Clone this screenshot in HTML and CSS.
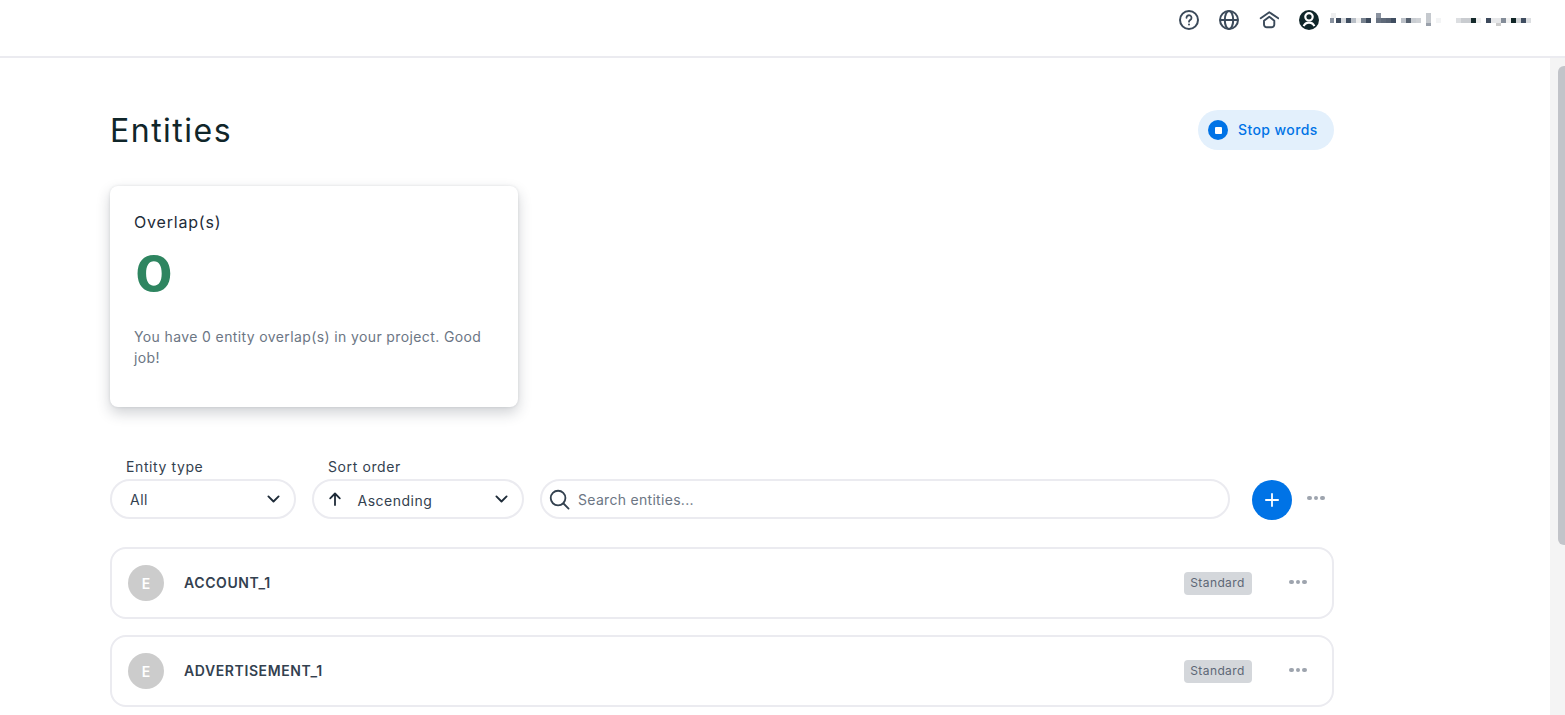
FILE: index.html
```html
<!DOCTYPE html>
<html lang="en">
<head>
<meta charset="utf-8">
<title>Entities</title>
<link rel="stylesheet" href="styles.css">
</head>
<body>
<header class="topbar">
  <svg class="top-icon" viewBox="0 0 20 20" fill="none" stroke="#3b4a5a" stroke-width="2" stroke-linecap="round" stroke-linejoin="round"><circle cx="10" cy="10" r="9"/><path d="M7.500 7.800a2.500 2.500 0 1 1 3.800 2.100c-.9.5-1.300 1-1.300 1.800" stroke-width="1.800"/><path d="M10 14.500v.1" stroke-width="2"/></svg>
  <svg class="top-icon" viewBox="0 0 20 20" fill="none" stroke="#3b4a5a" stroke-width="2"><circle cx="10" cy="10" r="9"/><ellipse cx="10" cy="10" rx="4.200" ry="9"/><path d="M1 10h18"/></svg>
  <svg class="top-icon" viewBox="0 0 20 20" fill="none" stroke="#3b4a5a" stroke-width="1.900" stroke-linecap="round" stroke-linejoin="round"><path d="M1.700 8.300 10.300 2.300l9 6"/><path d="M5 10.700 10.300 6.700l5 4v3.800a2.800 2.800 0 0 1-2.800 2.800H7.800A2.800 2.800 0 0 1 5 14.500z"/></svg>
  <svg class="top-icon" viewBox="0 0 20 20" fill="none"><circle cx="10" cy="10" r="10" fill="#10262a"/><circle cx="10" cy="6.800" r="3.700" stroke="#fff" stroke-width="2.200"/><path d="M4.700 16.200c.9-2.400 2.800-3.600 5.300-3.600s4.400 1.200 5.300 3.600" stroke="#fff" stroke-width="2.200"/></svg>
  <svg class="mosaic" viewBox="0 0 205 15" shape-rendering="crispEdges">
    <rect x="1" y="5" width="4" height="5" fill="#8a93a0"/><rect x="2" y="0" width="5" height="5" fill="#eeeff0"/>
    <rect x="7" y="5" width="5" height="5" fill="#3d4a5c"/><rect x="12" y="5" width="5" height="5" fill="#d5d8dc"/>
    <rect x="17" y="5" width="5" height="5" fill="#3f4d60"/><rect x="22" y="5" width="5" height="5" fill="#b9bfc7"/>
    <rect x="27" y="5" width="5" height="5" fill="#eeeeee"/><rect x="32" y="5" width="5" height="5" fill="#78828f"/>
    <rect x="37" y="5" width="5" height="5" fill="#3d4a5c"/><rect x="47" y="0" width="5" height="5" fill="#8b93a0"/>
    <rect x="47" y="5" width="5" height="5" fill="#6a7483"/><rect x="52" y="5" width="5" height="5" fill="#5f6a79"/>
    <rect x="57" y="5" width="5" height="5" fill="#586373"/><rect x="62" y="5" width="5" height="5" fill="#3f4d60"/>
    <rect x="72" y="5" width="5" height="5" fill="#bcc1c8"/><rect x="77" y="5" width="5" height="5" fill="#56616f"/>
    <rect x="82" y="5" width="5" height="5" fill="#c9cdd2"/><rect x="87" y="5" width="5" height="5" fill="#cfd2d6"/>
    <rect x="97" y="0" width="5" height="10" fill="#c5c9ce"/><rect x="97" y="10" width="5" height="3" fill="#9aa1ab"/>
    <rect x="107" y="5" width="5" height="5" fill="#f3f4f5"/><rect x="127" y="5" width="5" height="5" fill="#dcdee1"/>
    <rect x="132" y="5" width="10" height="5" fill="#c9ccd0"/><rect x="142" y="5" width="5" height="5" fill="#152a2b"/>
    <rect x="147" y="5" width="5" height="5" fill="#eeeeee"/><rect x="157" y="5" width="5" height="5" fill="#3d4a5c"/>
    <rect x="162" y="5" width="10" height="5" fill="#e6e7e9"/><rect x="167" y="10" width="5" height="3" fill="#cccccc"/>
    <rect x="172" y="5" width="5" height="5" fill="#838c98"/><rect x="177" y="5" width="5" height="5" fill="#f0f0f0"/>
    <rect x="182" y="5" width="5" height="5" fill="#102526"/><rect x="187" y="5" width="5" height="5" fill="#d0d3d6"/>
    <rect x="192" y="5" width="5" height="5" fill="#3f4d60"/><rect x="197" y="5" width="5" height="5" fill="#dcdee1"/>
  </svg>
</header>
<main class="content">
  <div class="page">
    <div class="title-row">
      <h1 class="title">Entities</h1>
      <button class="stop-btn" type="button">
        <span class="stop-dot"><span class="stop-square"></span></span>
        <span class="stop-label">Stop words</span>
      </button>
    </div>
    <section class="card">
      <h2 class="card-title">Overlap(s)</h2>
      <div class="card-value">0</div>
      <p class="card-text">You have 0 entity overlap(s) in your project. Good job!</p>
    </section>
    <div class="filters">
      <div class="field field-type">
        <label class="field-label">Entity type</label>
        <div class="select">
          <span class="select-value">All</span>
          <svg class="chevron" viewBox="0 0 14 9" fill="none" stroke="#1e2b38" stroke-width="2" stroke-linecap="round" stroke-linejoin="round"><path d="M1.500 1.500 7 7l5.500-5.500"/></svg>
        </div>
      </div>
      <div class="field field-sort">
        <label class="field-label">Sort order</label>
        <div class="select">
          <svg class="arrow" viewBox="0 0 14 14" fill="none" stroke="#1e2b38" stroke-width="1.800" stroke-linecap="round" stroke-linejoin="round"><path d="M7 13V1.500M2.200 6.300 7 1.500l4.800 4.800"/></svg>
          <span class="select-value">Ascending</span>
          <svg class="chevron" viewBox="0 0 14 9" fill="none" stroke="#1e2b38" stroke-width="2" stroke-linecap="round" stroke-linejoin="round"><path d="M1.500 1.500 7 7l5.500-5.500"/></svg>
        </div>
      </div>
      <div class="search">
        <svg class="search-icon" viewBox="0 0 22 22" fill="none" stroke="#33414f" stroke-width="1.900" stroke-linecap="round"><circle cx="9.500" cy="9.500" r="7.700"/><path d="m15.200 15.200 5.300 5.300"/></svg>
        <span class="search-text">Search entities...</span>
      </div>
      <button class="add-btn" type="button" aria-label="Add">
        <svg viewBox="0 0 14 14" fill="none" stroke="#fff" stroke-width="1.800" stroke-linecap="round"><path d="M7 .9v12.200M.9 7h12.200"/></svg>
      </button>
      <span class="dots dots-toolbar"><i></i><i></i><i></i></span>
    </div>
    <ul class="rows">
      <li class="row">
        <span class="avatar">E</span>
        <span class="row-name">ACCOUNT_1</span>
        <span class="badge">Standard</span>
        <span class="dots"><i></i><i></i><i></i></span>
      </li>
      <li class="row">
        <span class="avatar">E</span>
        <span class="row-name">ADVERTISEMENT_1</span>
        <span class="badge">Standard</span>
        <span class="dots"><i></i><i></i><i></i></span>
      </li>
    </ul>
  </div>
  <div class="scrollbar"><div class="scroll-thumb"></div></div>
</main>
</body>
</html>
```
FILE: styles.css
```css
* { box-sizing: border-box; }
html, body { margin: 0; height: 100%; overflow: hidden; }
body {
  font-family: Inter, "Liberation Sans", sans-serif;
  color: #10262a;
  background: #fff;
  display: flex;
  flex-direction: column;
}
.topbar {
  flex: 0 0 58px;
  border-bottom: 2px solid #ebebf0;
  display: flex;
  align-items: flex-start;
  padding: 10px 0 0 1179px;
}
.top-icon { width: 20px; height: 20px; margin-right: 20px; flex: none; }
.top-icon:nth-of-type(4) { margin-right: 10px; }
.mosaic { width: 205px; height: 15px; margin-top: 3px; flex: none; }
.content {
  flex: 1;
  min-height: 0;
  overflow: hidden;
  position: relative;
}
.scrollbar {
  position: absolute;
  top: 0;
  right: 0;
  bottom: 0;
  width: 15px;
  background: #f4f4f4;
  padding: 8px 0 0 8px;
}
.scroll-thumb {
  height: 479px;
  background: #c2c4c9;
  border-radius: 6px 0 0 6px;
}
.page {
  width: 1224px;
  margin-left: 110px;
  padding-top: 52px;
}
.title-row {
  display: flex;
  justify-content: space-between;
  align-items: center;
  height: 40px;
}
.title { margin: 0; padding-top: 2px; font-size: 32px; font-weight: 400; letter-spacing: 1.500px; line-height: 40px; }
.stop-btn {
  width: 136px;
  height: 40px;
  border: 0;
  border-radius: 20px;
  background: #e3f0fc;
  color: #0073e6;
  font: 500 14px Inter, "Liberation Sans", sans-serif;
  letter-spacing: .4px;
  display: flex;
  align-items: center;
  gap: 10px;
  padding: 0 0 0 10px;
}
.stop-label { padding-bottom: 2px; }
.stop-dot {
  width: 20px;
  height: 20px;
  border-radius: 50%;
  background: #0073e6;
  display: flex;
  align-items: center;
  justify-content: center;
}
.stop-square { width: 7px; height: 7px; background: #fff; border-radius: 1px; }
.card {
  width: 408px;
  height: 221px;
  margin-top: 36px;
  padding: 26px 24px 0;
  border-radius: 8px;
  background: #fff;
  box-shadow: 0 6px 14px rgba(40, 50, 65, .22), 0 0 3px rgba(40, 50, 65, .12);
}
.card-title { margin: 0; font-size: 16px; font-weight: 400; letter-spacing: .8px; line-height: 20px; color: #1e2b38; }
.card-value {
  margin: 12px 0 0 1px;
  font-size: 51px;
  font-weight: 700;
  line-height: 60px;
  color: #2e8560;
  transform: scaleX(1.1);
  transform-origin: left center;
}
.card-text { margin: 22px 0 0; font-size: 14px; line-height: 21px; letter-spacing: .38px; color: #6c7684; }
.filters {
  display: flex;
  align-items: flex-end;
  margin-top: 51px;
}
.field { display: flex; flex-direction: column; }
.field-type { width: 186px; margin-right: 16px; }
.field-sort { width: 212px; margin-right: 16px; }
.field-label { font-size: 14px; line-height: 17px; letter-spacing: .6px; color: #33414f; margin: 0 0 4px 16px; }
.select {
  height: 40px;
  border: 2px solid #ebebf0;
  border-radius: 20px;
  display: flex;
  align-items: center;
  padding: 0 14px 0 18px;
  font-size: 14px;
  letter-spacing: .5px;
  color: #33414f;
}
.select-value { flex: 1; }
.field-sort .select-value { padding-top: 2px; }
.chevron { width: 13px; height: 8.400px; flex: none; }
.arrow { width: 14px; height: 14px; margin: 0 16px 0 -4.500px; flex: none; }
.search {
  width: 690px;
  height: 40px;
  border: 2px solid #ebebf0;
  border-radius: 20px;
  display: flex;
  align-items: center;
  padding-left: 7px;
  gap: 8px;
  margin-right: 22px;
}
.search-icon { width: 21px; height: 21px; flex: none; }
.search-text { font-size: 14px; letter-spacing: .3px; color: #6c7684; }
.add-btn {
  width: 40px;
  height: 40px;
  border: 0;
  border-radius: 50%;
  background: #0073e6;
  padding: 13px;
  flex: none;
  margin-bottom: -1px;
}
.add-btn svg { display: block; width: 14px; height: 14px; }
.dots { display: inline-flex; gap: 2px; flex: none; }
.dots i { width: 4.500px; height: 4.500px; border-radius: 50%; background: #9ea4ae; }
.dots-toolbar { margin: 0 0 19px 15px; }
.rows { list-style: none; margin: 28px 0 0; padding: 0; display: flex; flex-direction: column; gap: 16px; }
.row {
  height: 72px;
  border: 2px solid #ebebf0;
  border-radius: 16px;
  display: flex;
  align-items: center;
  padding: 0 25.500px 0 16px;
}
.row .dots { margin-bottom: 2px; }
.avatar {
  width: 36px;
  height: 36px;
  border-radius: 50%;
  background: #cccccc;
  color: #fff;
  font-size: 14px;
  font-weight: 600;
  display: flex;
  align-items: center;
  justify-content: center;
  flex: none;
}
.row-name { flex: 1; margin-left: 20px; padding-bottom: 2px; font-size: 14px; font-weight: 600; letter-spacing: .6px; color: #33414f; }
.badge {
  width: 68px;
  height: 23px;
  border-radius: 4px;
  background: #d4d7db;
  color: #5d6776;
  font-size: 12px;
  letter-spacing: .4px;
  line-height: 22px;
  text-align: center;
  margin-right: 37.500px;
}
```
